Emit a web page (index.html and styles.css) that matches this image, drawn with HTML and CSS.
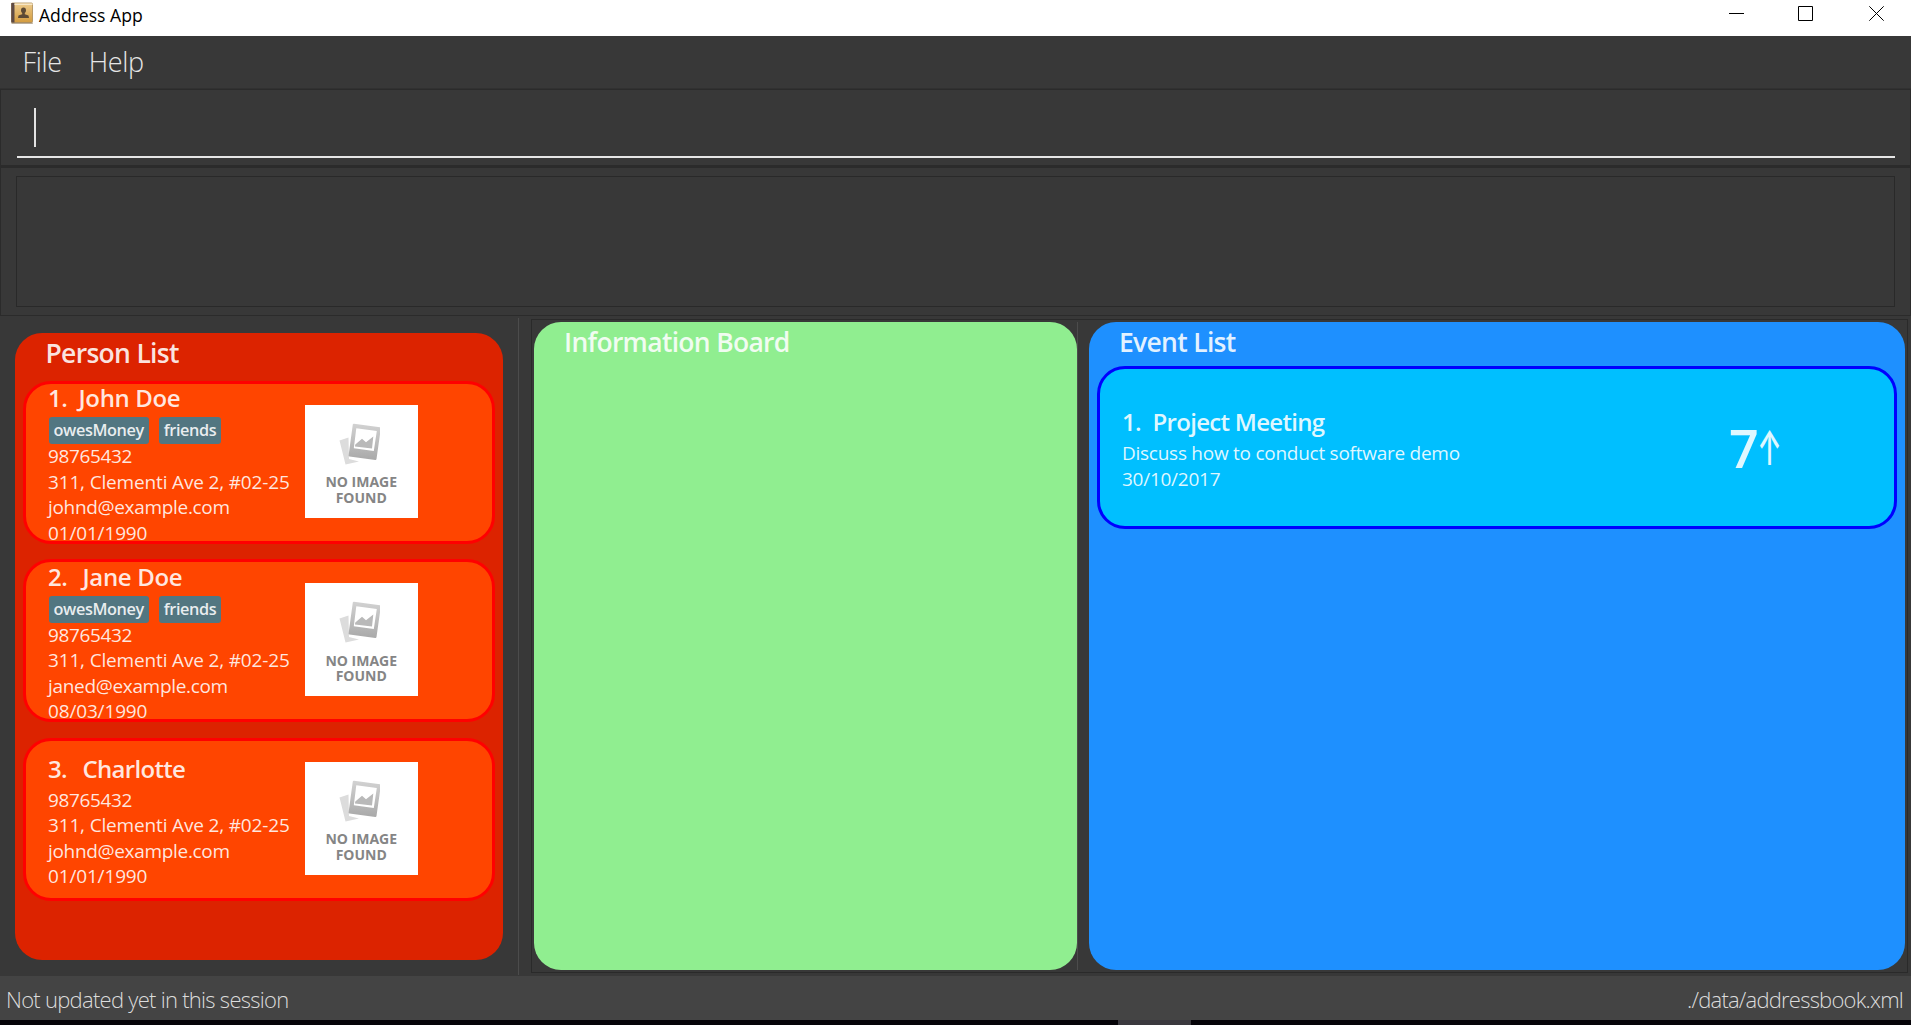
FILE: index.html
```html
<!DOCTYPE html>
<html lang="en">
<head>
<meta charset="utf-8">
<title>Address App</title>
<link rel="stylesheet" href="styles.css">
</head>
<body>
<svg class="defs" width="0" height="0" aria-hidden="true">
  <defs>
    <linearGradient id="frameFill" x1="0" y1="0" x2="0" y2="1">
      <stop offset="0" stop-color="#d2d2d2"/><stop offset="1" stop-color="#a9a9a9"/>
    </linearGradient>
    <linearGradient id="bookFill" x1="0" y1="0" x2="0" y2="1">
      <stop offset="0" stop-color="#eccb8d"/><stop offset="1" stop-color="#d49c3f"/>
    </linearGradient>
    <symbol id="photo" viewBox="0 0 42 42">
      <path d="M1.500 17.500 10.500 14.500 11 36 21 38.500 7.500 41.500Z" fill="#dcdcdc"/>
      <path fill="url(#frameFill)" fill-rule="evenodd" d="M16 .8 42 4.300 Q43 4.500 42.800 5.500 L38.500 36 Q38.300 37 37.300 36.900 L11.500 33.500 Q10.500 33.300 10.600 32.300 L14.800 1.600 Q15 .7 16 .8ZM18.300 5.200 38.800 8 35.800 28 15.800 25.300Z"/>
      <path d="M17.300 21.500 24 15.800 28 19.300 35.300 13.500 34 25.600 16.900 23.400Z" fill="#b9b9b9"/>
    </symbol>
  </defs>
</svg>
<div class="window">
  <header class="titlebar">
    <svg class="app-icon" width="22" height="22" viewBox="0 0 22 22">
      <rect x=".5" y="1" width="21" height="19.500" rx="1" fill="url(#bookFill)" stroke="#a98a55" stroke-width=".8"/>
      <path d="M.3 1h3.200v19.600H.3z" fill="#5d4a45"/>
      <path d="M3.500 1.500h18v1.500h-18z" fill="#f6e6c6"/>
      <path d="M.5 20.700h21.300v.9H.5z" fill="#8f7a5a"/>
      <path d="M12.500 5.500c1.800 0 2.500 1.200 2.500 2.700 0 1.300-.6 2.200-1.200 2.800v1.300l3.700 1.300.5 2.400H7l.5-2.400 3.700-1.300V11c-.6-.6-1.200-1.500-1.200-2.800 0-1.500.7-2.700 2.500-2.700z" fill="#5d4a35"/>
    </svg>
    <span class="app-name">Address App</span>
    <svg class="controls" width="160" height="17" viewBox="0 0 160 17" fill="none" stroke="#000">
      <path d="M0 8.500h15M69.500 1.500h14v14h-14zM140.300 1.300l14.400 14.400M154.700 1.300l-14.400 14.400"/>
    </svg>
  </header>
  <nav class="menubar"><span>File</span><span>Help</span></nav>
  <section class="command"><div class="field"><i class="caret"></i></div></section>
  <section class="result"><div class="result-box"></div></section>
  <main class="split">
    <div class="person-pane">
      <section class="panel persons">
        <h2>Person List</h2>
        <article class="card">
          <div class="info">
            <h3><b>1.</b>John Doe</h3>
            <div class="tags"><span>owesMoney</span><span>friends</span></div>
            <p class="phone">98765432</p><p>311, Clementi Ave 2, #02-25</p><p class="mail">johnd@example.com</p><p>01/01/1990</p>
          </div>
          <div class="photo"><svg width="42" height="42"><use href="#photo"/></svg><span>NO IMAGE</span><span>FOUND</span></div>
        </article>
        <article class="card">
          <div class="info">
            <h3><b class="wide">2.</b>Jane Doe</h3>
            <div class="tags"><span>owesMoney</span><span>friends</span></div>
            <p class="phone">98765432</p><p>311, Clementi Ave 2, #02-25</p><p class="mail">janed@example.com</p><p>08/03/1990</p>
          </div>
          <div class="photo"><svg width="42" height="42"><use href="#photo"/></svg><span>NO IMAGE</span><span>FOUND</span></div>
        </article>
        <article class="card">
          <div class="info">
            <h3 class="tight"><b class="wide">3.</b>Charlotte</h3>
            <p class="phone">98765432</p><p>311, Clementi Ave 2, #02-25</p><p class="mail">johnd@example.com</p><p>01/01/1990</p>
          </div>
          <div class="photo"><svg width="42" height="42"><use href="#photo"/></svg><span>NO IMAGE</span><span>FOUND</span></div>
        </article>
      </section>
    </div>
    <div class="divider"></div>
    <div class="right-pane">
      <section class="panel board"><h2>Information Board</h2></section>
      <div class="divider inner"></div>
      <section class="panel events">
        <h2>Event List</h2>
        <article class="card event">
          <div class="info">
            <h3 class="tight"><b>1.</b>Project Meeting</h3>
            <p>Discuss how to conduct software demo</p><p>30/10/2017</p>
          </div>
          <div class="countdown">7<span>↑</span></div>
        </article>
      </section>
    </div>
  </main>
  <footer class="status"><span>Not updated yet in this session</span><span class="path">./data/addressbook.xml</span></footer>
  <div class="taskbar"><i></i></div>
</div>
</body>
</html>
```
FILE: styles.css
```css
* { box-sizing: border-box; margin: 0; padding: 0; }
body { background: #383838; font-family: "Open Sans", "Noto Sans", sans-serif; }
.defs { position: absolute; }
.window { width: 1911px; height: 1025px; display: flex; flex-direction: column; overflow: hidden; }

.titlebar { height: 36px; flex: none; background: #fff; display: flex; align-items: flex-start; padding: 2px 22px 0 11px; }
.app-name { margin-left: 6px; font-size: 17.6px; line-height: 26px; letter-spacing: 0; color: #000; }
.controls { margin: 3px 0 0 auto; }

.menubar { height: 53px; flex: none; display: flex; gap: 27px; padding: 6px 0 0 22.500px; font-size: 27px; font-weight: 300; line-height: 40px; letter-spacing: -.35px; color: #e6e6e6; border-bottom: 1px solid #313131; }

.command { height: 78px; flex: none; border: 1px solid #2b2b2b; border-bottom-width: 2px; padding: 0 15px 0 16px; }
.field { height: 68px; border-bottom: 2px solid #e6e6e6; padding: 18px 0 0 17px; }
.caret { display: block; width: 2px; height: 39px; background: #e3e3e3; }

.result { height: 149px; flex: none; border: 1px solid #2b2b2b; padding: 8px 15px 8px 15px; }
.result-box { height: 131px; border: 1px solid #292929; }

.split { flex: 1; display: flex; min-height: 0; }
.person-pane { width: 518px; padding: 17px 15px 16px; }
.divider { width: 1px; margin: 2px 0 1px; background: #4c4c4c; }
.right-pane { width: 1377px; margin: 3px 0 0 12px; height: 654px; border: 1px solid #2a2a2a; padding: 2px; display: flex; }
.divider.inner { margin: 0 11px 0 0; }

.panel { border-radius: 27px; color: rgba(255,255,255,.88); }
.panel h2 { font-size: 26.500px; font-weight: 600; line-height: 41px; letter-spacing: -.7px; }
.persons { height: 627px; background: #dc2300; padding: 0 8px; display: flex; flex-direction: column; gap: 16px; }
.persons h2 { padding-left: 22.500px; margin-bottom: -9.500px; }
.board { width: 543px; background: #90ee90; padding-left: 30px; }
.events { flex: 1; background: #1e90ff; padding: 0 8px; }
.events h2 { padding-left: 22px; margin-bottom: 3px; }

.card { height: 163px; flex: none; border: 3px solid #f00; border-radius: 28px; background: #ff4500; display: flex; align-items: center; overflow: hidden; padding-left: 22px; }
.persons .card + .card { margin-top: -.5px; }
.info { width: 257px; flex: none; padding-top: 4px; }
.card h3 { display: flex; font-size: 24px; font-weight: 600; line-height: 32px; letter-spacing: -.35px; margin-bottom: 3px; white-space: nowrap; }
.card h3.tight { letter-spacing: -.7px; }
.card h3 b { width: 30.500px; font-weight: 600; }
.card h3 b.wide { width: 34.500px; }
.card p { font-size: 19px; line-height: 25.500px; letter-spacing: -.16px; white-space: nowrap; }
.card p.phone { letter-spacing: -.35px; }
.card p.mail { letter-spacing: -.32px; }
.tags { display: flex; gap: 10px; padding-left: .5px; }
.tags span { height: 27px; padding: 0 5px; border-radius: 3px; background: #527681; font-size: 16.300px; font-weight: 600; line-height: 26px; letter-spacing: -.4px; }

.photo { width: 112.500px; height: 113px; background: #fff; display: flex; flex-direction: column; align-items: center; margin-top: -2px; padding-top: 18px; color: #858585; font-size: 14px; font-weight: 700; line-height: 15.500px; }
.photo svg { margin: 0 0 9.500px -4px; overflow: visible; }

.event { border-color: #00f; background: #00bfff; }
.event .info { width: 607px; padding-top: 3px; }
.event p { letter-spacing: -.26px; }
.countdown { font-size: 52px; font-weight: 600; line-height: 60px; display: flex; }
.countdown span { margin-left: -2px; font-family: Inter, sans-serif; font-weight: 500; font-size: 44px; transform: scale(.66, 1.08); transform-origin: 0 50%; }

.status { height: 44px; flex: none; background: #444; display: flex; justify-content: space-between; padding: 0 8px 0 6px; font-size: 22px; font-weight: 300; line-height: 47px; letter-spacing: -.72px; color: #dcdcdc; }
.status .path { letter-spacing: -.78px; }
.taskbar { height: 5px; flex: none; background: #050308; padding-left: 1118px; }
.taskbar i { display: block; width: 73px; height: 5px; background: #3b393e; }
```
